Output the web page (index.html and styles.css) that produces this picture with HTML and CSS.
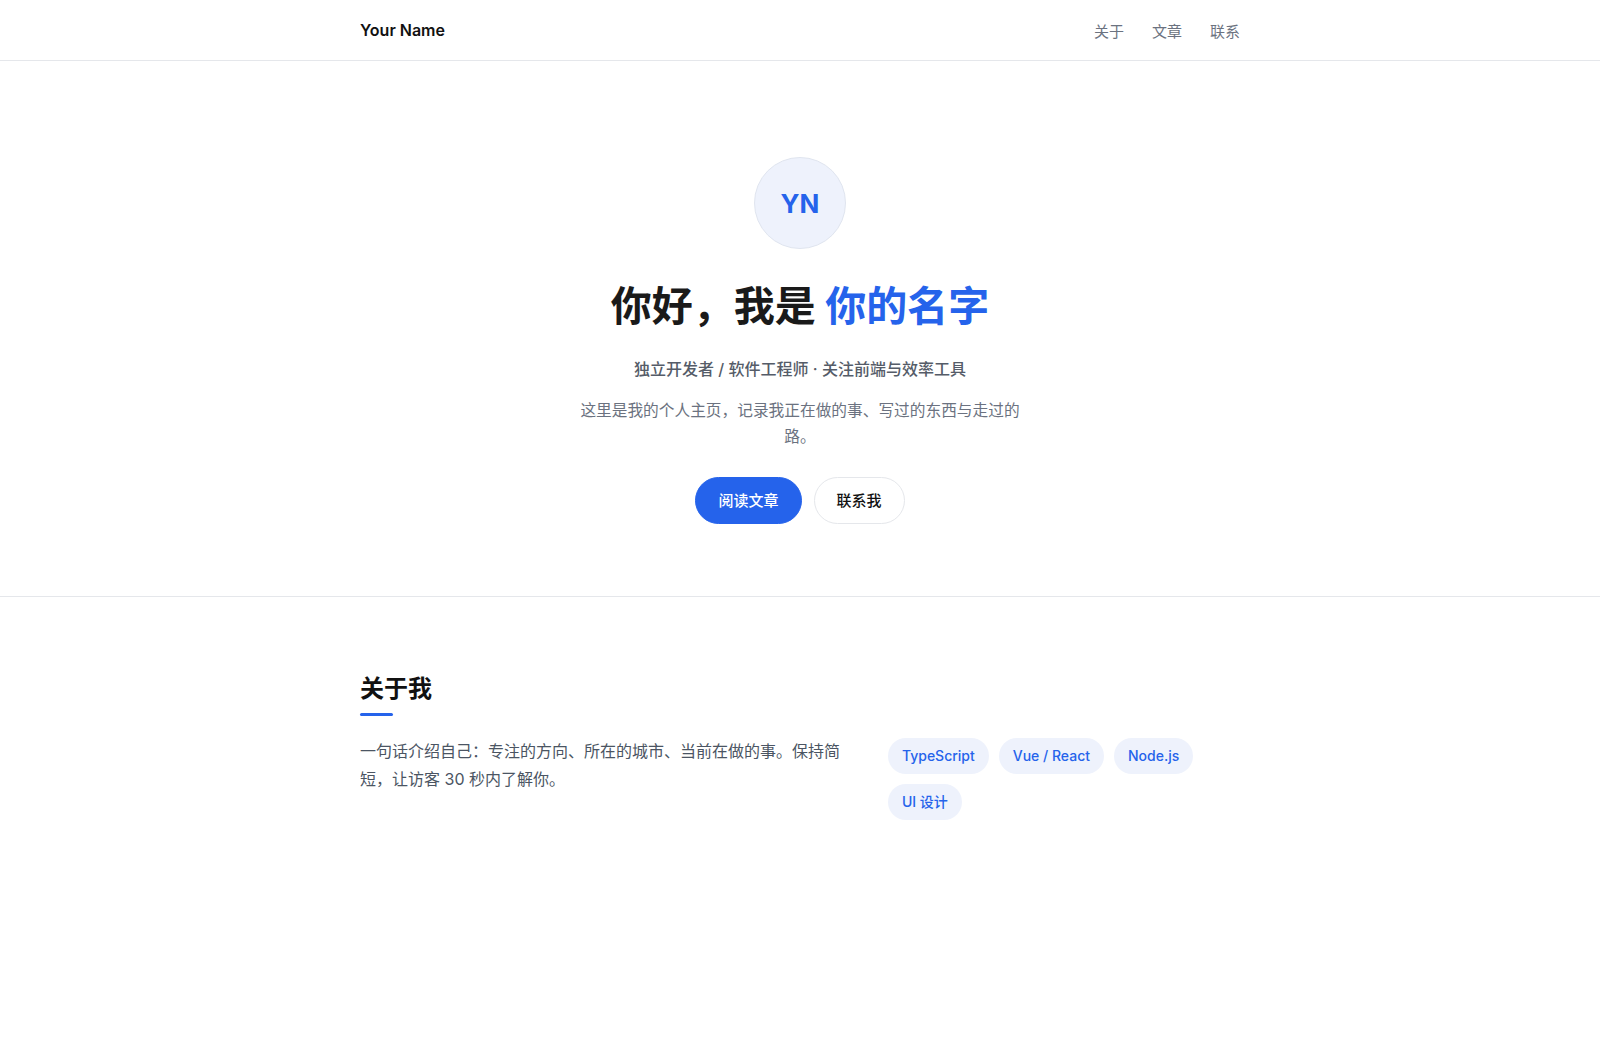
FILE: index.html
```html
<!DOCTYPE html>
<html lang="zh-CN">
<head>
    <meta charset="utf-8">
    <title>Your Name</title>
    <link rel="stylesheet" href="styles.css">
</head>
<body>
    <header class="site-header">
        <div class="container header-inner">
            <a class="brand" href="#">Your Name</a>
            <nav class="nav">
                <a href="#about">关于</a>
                <a href="#posts">文章</a>
                <a href="#contact">联系</a>
            </nav>
        </div>
    </header>

    <section class="hero">
        <div class="avatar">YN</div>
        <h1 class="hero-title">你好，我是 <span class="accent">你的名字</span></h1>
        <p class="hero-sub">独立开发者 / 软件工程师 · 关注前端与效率工具</p>
        <p class="hero-desc">这里是我的个人主页，记录我正在做的事、写过的东西与走过的路。</p>
        <div class="hero-actions">
            <a class="btn btn-primary" href="#posts">阅读文章</a>
            <a class="btn btn-outline" href="#contact">联系我</a>
        </div>
    </section>

    <section class="about" id="about">
        <div class="container">
            <h2 class="section-title">关于我</h2>
            <div class="about-grid">
                <p class="about-text">一句话介绍自己：专注的方向、所在的城市、当前在做的事。保持简短，让访客 30 秒内了解你。</p>
                <ul class="tags">
                    <li>TypeScript</li>
                    <li>Vue / React</li>
                    <li>Node.js</li>
                    <li>UI 设计</li>
                </ul>
            </div>
        </div>
    </section>
</body>
</html>
```

FILE: styles.css
```css
* {
    box-sizing: border-box;
}
body {
    margin: 0;
    font-family: Inter, "Noto Sans CJK SC", sans-serif;
    color: #111827;
    background: #fff;
}
a {
    text-decoration: none;
    color: inherit;
}
.container {
    max-width: 880px;
    margin: 0 auto;
}

/* header */
.site-header {
    border-bottom: 1px solid #e5e7eb;
}
.header-inner {
    height: 60px;
    display: flex;
    align-items: center;
    justify-content: space-between;
}
.brand {
    font-size: 16px;
    font-weight: 600;
    color: #111;
}
.nav {
    display: flex;
    gap: 28px;
}
.nav a {
    font-size: 15px;
    color: #6b7280;
}

/* hero */
.hero {
    display: flex;
    flex-direction: column;
    align-items: center;
    text-align: center;
    padding: 96px 20px 72px;
    border-bottom: 1px solid #e5e7eb;
}
.avatar {
    width: 92px;
    height: 92px;
    border-radius: 50%;
    background: #eef2fc;
    border: 1px solid #e0e5ef;
    display: flex;
    align-items: center;
    justify-content: center;
    color: #2563eb;
    font-size: 26px;
    font-weight: 700;
    margin-bottom: 33px;
}
.hero-title {
    margin: 0;
    font-size: 41px;
    font-weight: 700;
    line-height: 1.2;
    color: #1a1a1a;
}
.accent {
    color: #2563eb;
}
.hero-sub {
    margin: 26px 0 0;
    font-size: 16px;
    font-weight: 500;
    line-height: 1.6;
    color: #555c68;
}
.hero-desc {
    margin: 15px 0 0;
    max-width: 460px;
    font-size: 15.7px;
    line-height: 1.7;
    color: #6b7280;
}
.hero-actions {
    display: flex;
    gap: 12px;
    margin-top: 26px;
}
.btn {
    display: inline-block;
    padding: 12px 22px;
    border-radius: 999px;
    font-size: 15px;
    font-weight: 500;
    line-height: 21px;
    border: 1px solid transparent;
}
.btn-primary {
    background: #2563eb;
    border-color: #2563eb;
    color: #fff;
}
.btn-outline {
    background: #fff;
    border-color: #e5e7eb;
    color: #111;
}

/* about */
.about {
    padding: 76px 0 80px;
}
.section-title {
    margin: 0 0 24px;
    font-size: 24px;
    font-weight: 700;
    line-height: 1.3;
    color: #111;
    padding-bottom: 10px;
    position: relative;
}
.section-title::after {
    content: "";
    position: absolute;
    left: 0;
    bottom: -2px;
    width: 33px;
    height: 3px;
    border-radius: 2px;
    background: #2563eb;
}
.about-grid {
    display: grid;
    grid-template-columns: 1.4fr 1fr;
    gap: 35px;
    align-items: start;
}
.about-text {
    margin: 0;
    font-size: 16px;
    line-height: 1.7;
    color: #4b5563;
}
.tags {
    list-style: none;
    margin: 0;
    padding: 0;
    display: flex;
    flex-wrap: wrap;
    gap: 10px;
}
.tags li {
    padding: 7px 14px;
    border-radius: 999px;
    background: #eef2fc;
    color: #2563eb;
    font-size: 14px;
    font-weight: 500;
    line-height: 22px;
}
```
